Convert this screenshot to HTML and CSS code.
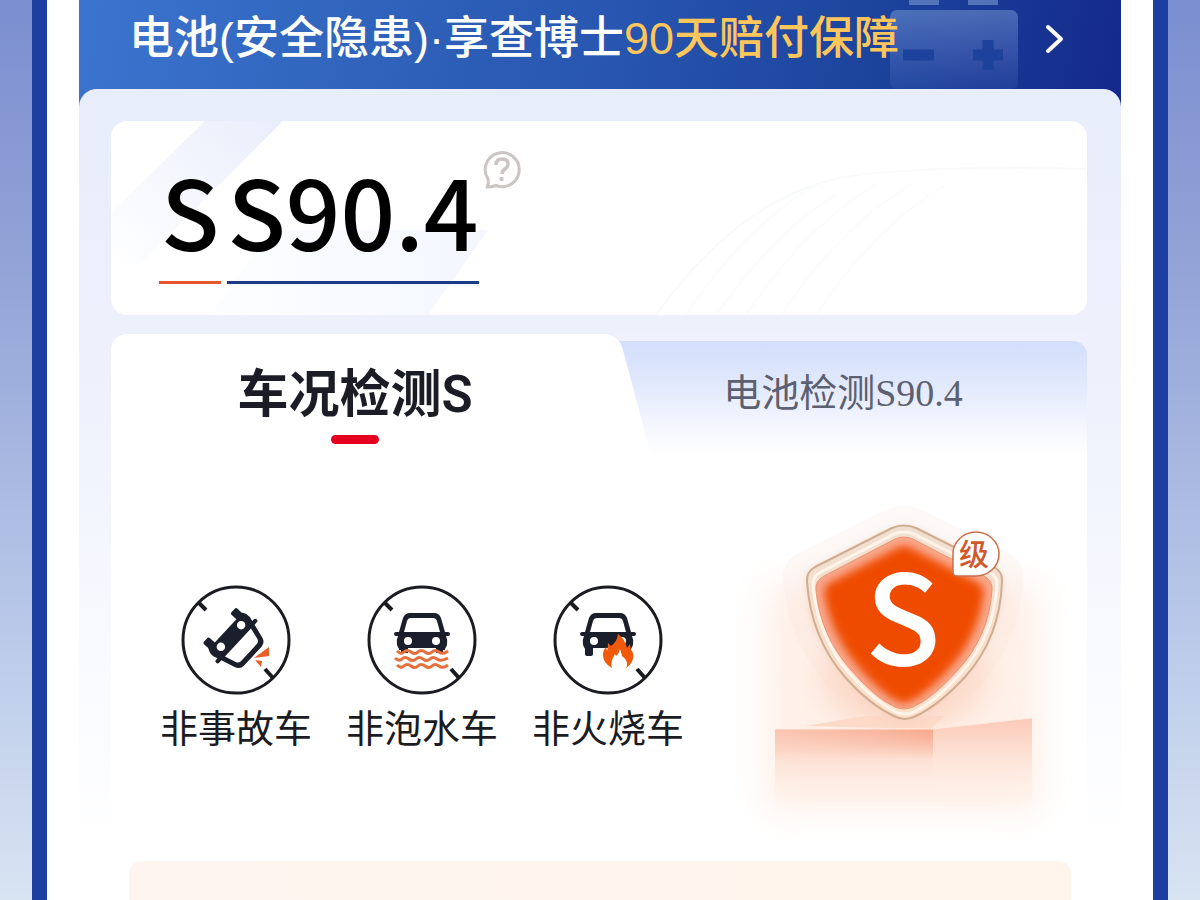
FILE: index.html
```html
<!DOCTYPE html>
<html lang="zh-CN">
<head>
    <meta charset="UTF-8">
    <meta name="viewport" content="width=device-width, initial-scale=1.0">
    <title>车况检测</title>
    <link rel="stylesheet" href="styles.css">
</head>
<body>
    <!-- Shared car drawing -->
    <svg class="defs" width="0" height="0" aria-hidden="true">
        <symbol id="car" viewBox="0 0 110 110">
            <path fill="#1b1e2b" fill-rule="evenodd" d="M43 28h24q5 0 7 5l4 14h3q2 0 2 2t-2 2h-2q2 4 1 9l-2 4v5q0 2-2 2h-4q-2 0-2-2v-6H40v6q0 2-2 2h-4q-2 0-2-2v-5l-2-4q-1-5 1-9h-2q-2 0-2-2t2-2h3l4-14q2-5 7-5zM44 33q-3 0-4 3l-3 11h36l-3-11q-1-3-4-3z"/>
            <circle cx="41" cy="56" r="4" fill="#fff"/>
            <circle cx="69" cy="56" r="4" fill="#fff"/>
        </symbol>
        <symbol id="ring" viewBox="0 0 110 110">
            <circle cx="55" cy="55" r="53" fill="none" stroke="#1b1c22" stroke-width="3"/>
            <path d="M17 17l8 8M84 84l8 9" stroke="#1b1c22" stroke-width="4"/>
        </symbol>
    </svg>

    <div class="frame">
        <div class="page">
            <a href="#" class="banner">
                <svg class="battery" width="132" height="89" viewBox="0 0 132 89" aria-hidden="true">
                    <defs>
                        <linearGradient id="bat" x1="0" y1="0" x2="0" y2="1">
                            <stop offset="0" stop-color="#8fb0e4" stop-opacity=".42"/>
                            <stop offset="1" stop-color="#8fa5e4" stop-opacity=".08"/>
                        </linearGradient>
                    </defs>
                    <path d="M20 0h30v5H20zM79 0h30v5H79z" fill="#7292cb" opacity=".65"/>
                    <rect x="1" y="10" width="128" height="79" rx="7" fill="url(#bat)"/>
                    <path d="M14 55h31M84 55h30M99 40v30" stroke="#1d429c" stroke-width="11"/>
                </svg>
                <span class="banner-text">电池(安全隐患)·享查博士<em>90天赔付保障</em></span>
                <svg class="arrow" width="20" height="32" viewBox="0 0 20 32" aria-hidden="true">
                    <path d="M3 4l13 12L3 28" fill="none" stroke="#fff" stroke-width="4" stroke-linecap="round" stroke-linejoin="round"/>
                </svg>
            </a>

            <main class="panel">
                <!-- Score -->
                <section class="score-card">
                    <svg class="score-bg" viewBox="0 0 976 194" preserveAspectRatio="none" aria-hidden="true">
                        <defs>
                            <linearGradient id="strip" x1="1" y1="0" x2="0" y2="1">
                                <stop offset="0" stop-color="#e9eefb"/>
                                <stop offset="1" stop-color="#fff"/>
                            </linearGradient>
                            <linearGradient id="strip2" x1="0" y1="0" x2="1" y2="0">
                                <stop offset="0" stop-color="#fbfdff"/>
                                <stop offset="1" stop-color="#eef3fd"/>
                            </linearGradient>
                        </defs>
                        <path d="M94 0h78L28 144H0V92z" fill="url(#strip)"/>
                        <path d="M160 109h217l-60 85H100z" fill="url(#strip2)" opacity=".7"/>
                        <path d="M545 194q90-125 200-140 100-10 230-6" fill="none" stroke="#f8fafb" stroke-width="2"/>
                        <path d="M575 194q60-90 130-130M605 194q60-85 120-120M635 194q60-90 130-130M670 194q60-90 130-130M705 194q60-90 130-130" fill="none" stroke="#fbfcfd" stroke-width="2"/>
                    </svg>
                    <div class="score">
                        <span class="score-part score-level">S</span>
                        <span class="score-part score-battery">S90.4</span>
                    </div>
                    <button class="help" type="button" aria-label="评分说明">
                        <svg width="38" height="38" viewBox="0 0 38 38">
                            <path d="M5 28A17 17 0 1 1 13 34.500Q9 36 4 36 6 33 5 28z" fill="none" stroke="#cbc6c3" stroke-width="3" stroke-linejoin="round"/>
                            <path d="M13 14q0-6 6-6t6 5q0 3-3 5t-3 5" fill="none" stroke="#cbc6c3" stroke-width="3.500"/>
                            <circle cx="18.500" cy="28" r="2.200" fill="#cbc6c3"/>
                        </svg>
                    </button>
                </section>

                <!-- Inspection -->
                <section class="check-card">
                    <div class="tabs" role="tablist">
                        <button class="tab active" type="button" role="tab" aria-selected="true">车况检测S</button>
                        <button class="tab" type="button" role="tab" aria-selected="false">电池检测S90.4</button>
                    </div>

                    <div class="check-body">
                        <ul class="features">
                            <li>
                                <svg viewBox="0 0 110 110" aria-hidden="true">
                                    <use href="#ring"/>
                                    <use href="#car" width="110" height="110" transform="translate(50 51) rotate(133) scale(1.060) translate(-55 -56)"/>
                                    <path d="M73 73l15-11v9zM74 75l7 1-1 6z" fill="#e9602a"/>
                                </svg>
                                <span>非事故车</span>
                            </li>
                            <li>
                                <svg viewBox="0 0 110 110" aria-hidden="true">
                                    <use href="#ring"/>
                                    <use href="#car" width="110" height="110"/>
                                    <path d="M28 65h55v18H28z" fill="#fff"/>
                                    <path d="M34 63h7v5h-7zM69 63h7v5h-7z" fill="#1b1e2b"/>
                                    <path d="M30 66q4 4 7 1t7 0 7 0 7 0 7 0 7 0 9-1M28 73q4 4 7 1t7 0 7 0 7 0 7 0 7 0 11-1M30 80q4 4 7 1t7 0 7 0 7 0 7 0 7 0 9-1" fill="none" stroke="#e5703c" stroke-width="3"/>
                                </svg>
                                <span>非泡水车</span>
                            </li>
                            <li>
                                <svg viewBox="0 0 110 110" aria-hidden="true">
                                    <use href="#ring"/>
                                    <use href="#car" width="110" height="110"/>
                                    <path d="M59 83q-9-5-9-13 0-5 3-8l1 4q1-4 1-8l3 3q6-4 7-12 7 5 9 14l3-4q0 5 3 9 2 9-7 15 3-7-4-12l-2-7q-1 5-4 7l-1-2q-4 7-3 14z" fill="#f05a0a"/>
                                    <path d="M59 83q-2-7 3-13l1 2q3-3 4-7l2 7q7 6 4 11z" fill="#fff"/>
                                </svg>
                                <span>非火烧车</span>
                            </li>
                        </ul>

                        <svg class="shield" width="367" height="370" viewBox="0 0 367 370" role="img" aria-label="S级">
                            <defs>
                                <radialGradient id="glow">
                                    <stop offset="0" stop-color="#fbc3aa" stop-opacity=".85"/>
                                    <stop offset=".6" stop-color="#fddccb" stop-opacity=".6"/>
                                    <stop offset="1" stop-color="#fff" stop-opacity="0"/>
                                </radialGradient>
                                <linearGradient id="boxFront" x1="0" y1="0" x2="0" y2="1">
                                    <stop offset="0" stop-color="#fbc9b7"/>
                                    <stop offset=".35" stop-color="#fde0d3"/>
                                    <stop offset="1" stop-color="#fff4ec" stop-opacity="0"/>
                                </linearGradient>
                                <linearGradient id="boxShade" x1="0" y1="0" x2="1" y2="0">
                                    <stop offset="0" stop-color="#f9b8a2" stop-opacity=".3"/>
                                    <stop offset="1" stop-color="#f7a78b"/>
                                </linearGradient>
                                <linearGradient id="fade" x1="0" y1="0" x2="0" y2="1">
                                    <stop offset="0" stop-color="#fff"/>
                                    <stop offset="1" stop-color="#000"/>
                                </linearGradient>
                                <linearGradient id="outer" x1="0" y1="0" x2="0" y2="1">
                                    <stop offset="0" stop-color="#f6ece8" stop-opacity=".3"/>
                                    <stop offset="1" stop-color="#f8cdb9" stop-opacity=".1"/>
                                </linearGradient>
                                <linearGradient id="rim" x1="0" y1="0" x2="0" y2="1">
                                    <stop offset="0" stop-color="#f0dfd0"/>
                                    <stop offset="1" stop-color="#fde0cb"/>
                                </linearGradient>
                                <mask id="boxMask"><rect x="55" y="239" width="158" height="30" fill="url(#fade)"/></mask>
                                <clipPath id="inner">
                                    <path d="M175 49q9-4 18 0l71 37q9 5 8 14-3 46-34 80-25 28-45 37-9 4-18 0-20-9-44-37-31-35-35-80-1-9 8-14z"/>
                                </clipPath>
                                <filter id="soft" x="-20%" y="-20%" width="140%" height="140%"><feGaussianBlur stdDeviation="4"/></filter>
                                <filter id="halo" x="-20%" y="-20%" width="140%" height="140%"><feGaussianBlur stdDeviation="18"/></filter>
                            </defs>

                            <!-- Glow and plinth -->
                            <rect x="45" y="95" width="275" height="225" fill="#fee9de" opacity=".7" filter="url(#halo)"/>
                            <ellipse cx="184" cy="190" rx="125" ry="80" fill="url(#glow)"/>
                            <path d="M85 236l60-10h80l-15 13z" fill="#fdd9c8"/>
                            <path d="M55 239h158v84H55z" fill="url(#boxFront)"/>
                            <path d="M55 239h158v30H55z" fill="url(#boxShade)" mask="url(#boxMask)"/>
                            <path d="M213 239l99-11v98h-99z" fill="url(#boxFront)"/>
                            <path d="M55 239h158l99-11" fill="none" stroke="#feeadf" stroke-width="1"/>

                            <!-- Shield -->
                            <path d="M165 20q18-8 37 0l88 44q15 8 13 26-4 68-48 111-32 31-71 37-39-6-71-37-44-43-50-111-1-18 14-26z" fill="url(#outer)"/>
                            <path d="M172 39q12-5 24 0l77 38q9 5 9 15-2 52-37 92-26 30-49 42-12 5-24 0-24-12-49-42-34-40-37-92 0-10 9-15z" fill="#eec0a4" opacity=".5" filter="url(#soft)"/>
                            <path d="M172 38q12-5 24 0l78 39q9 5 8 15-2 56-37 95-26 28-49 39-11 6-22 0-24-11-49-39-34-39-38-95-1-10 8-15z" fill="url(#rim)" stroke="#d0ad91" stroke-width="2"/>
                            <path d="M174 44q10-4 20 0l75 38q9 5 8 13-3 51-36 88-25 28-47 39-9 4-18 0-22-11-47-39-31-36-36-88-1-8 8-13z" fill="none" stroke="#fff4e9" stroke-width="3"/>
                            <g clip-path="url(#inner)">
                                <rect x="85" y="35" width="200" height="200" fill="#f9a88d"/>
                                <path d="M179 59q5-2 10 0l69 36q4 3 4 7-5 42-33 74-22 25-40 34-5 2-10 0-18-9-39-34-28-33-34-74 0-4 4-7z" fill="#ef4b00" stroke="#ef4b00" stroke-width="4" filter="url(#soft)"/>
                                <path d="M184 66l70 38q-6 36-33 67-20 24-37 32-17-8-36-32-27-31-33-67z" fill="#ef4b00"/>
                            </g>
                            <path d="M175 49q9-4 18 0l71 37q9 5 8 14-3 46-34 80-25 28-45 37-9 4-18 0-20-9-44-37-31-35-35-80-1-9 8-14z" fill="none" stroke="#eb9472" stroke-width="1"/>
                            <text class="shield-letter" x="183" y="175" text-anchor="middle">S</text>

                            <!-- Level bubble -->
                            <path d="M237 86q-4 0-4-4V64a23 22 0 0 1 46 0 23 22 0 0 1-23 22z" fill="#fff" stroke="#c96f49" stroke-width="1.500"/>
                            <text class="shield-level" x="254" y="75" text-anchor="middle">级</text>
                        </svg>
                    </div>

                    <div class="note"></div>
                </section>
            </main>
        </div>
    </div>
</body>
</html>
```
FILE: styles.css
```css
* {
    box-sizing: border-box;
}

body {
    margin: 0;
    min-height: 100vh;
    display: flex;
    padding: 0 32px;
    font-family: "Noto Sans CJK SC", sans-serif;
    color: #1b1c22;
    background: linear-gradient(#7b8ed0, #96a6d8 33%, #b6c6e8 67%, #d8e4f2);
}

button {
    border: 0;
    padding: 0;
    background: none;
    font: inherit;
    color: inherit;
}

.defs {
    position: absolute;
}

.frame {
    flex: 1;
    display: flex;
    min-width: 0;
    padding: 0 32px;
    border: solid #1e3fa2;
    border-width: 0 15px;
    background: #fff;
}

.page {
    flex: 1;
    display: flex;
    flex-direction: column;
    min-width: 0;
    background: linear-gradient(100deg, #3b74cf, #2f62ba 30%, #2856b0 50%, #1c449d 75%, #14298b) top / 100% 120px no-repeat;
}

/* Banner */
.banner {
    position: relative;
    display: flex;
    justify-content: space-between;
    align-items: center;
    height: 89px;
    padding: 0 56px 12px 50px;
    color: #fff;
    text-decoration: none;
}

.battery {
    position: absolute;
    top: 0;
    right: 100px;
}

.banner-text {
    position: relative;
    font-family: "Liberation Sans", "Noto Sans CJK SC", sans-serif;
    font-size: 45px;
    font-weight: 500;
    line-height: 64px;
    white-space: nowrap;
}

.banner-text em {
    font-style: normal;
    color: #fdc65b;
}

/* Panel */
.panel {
    flex: 1;
    display: flex;
    flex-direction: column;
    gap: 19px;
    padding: 32px 34px 0 32px;
    border-radius: 18px 18px 0 0;
    background: linear-gradient(#e8edfb, #eff2fc 40%, #f9faff 70%, #fff 94%);
}

.score-card {
    position: relative;
    display: flex;
    align-items: flex-start;
    gap: 4px;
    height: 194px;
    padding: 30px 48px 0;
    border-radius: 16px;
    background: #fff;
    overflow: hidden;
}

.score-bg {
    position: absolute;
    inset: 0;
    width: 100%;
    height: 100%;
}

.score {
    position: relative;
    display: flex;
    gap: 6px;
    font-size: 96px;
    font-weight: 500;
    line-height: 118px;
    color: #000;
}

.score-part {
    height: 133px;
    border-bottom: 3px solid #1d3a86;
    white-space: nowrap;
}

.score-level {
    padding: 0 2px;
    border-color: #e4572e;
}

.help {
    position: relative;
    height: 38px;
}

/* Inspection card */
.check-card {
    flex: 1;
    display: flex;
    flex-direction: column;
    border-radius: 16px 16px 0 0;
    background: #fff;
}

.tabs {
    display: grid;
    grid-template-columns: 1fr 1fr;
    height: 122px;
    border-radius: 16px 0 0 0;
    background: linear-gradient(#eff2fc 24px, transparent 24px);
}

.tab {
    position: relative;
    height: 115px;
    padding-bottom: 18px;
    margin-top: 7px;
    border-radius: 0 14px 0 0;
    font-family: "Liberation Serif", "Noto Sans CJK SC", serif;
    font-size: 38px;
    color: #5c6070;
    background: linear-gradient(#d2defb, #e0e8fc 35%, #f5f7ff 75%, #fff);
}

.tab.active {
    z-index: 1;
    height: 122px;
    margin-top: 0;
    padding-bottom: 10px;
    border-radius: 16px 0 0 0;
    font-family: Roboto, "Noto Sans CJK SC", sans-serif;
    font-size: 51px;
    font-weight: 600;
    color: #1b1c26;
    background: #fff;
}

/* Slanted edge of the active tab */
.tab.active::after {
    content: "";
    position: absolute;
    z-index: -1;
    top: 0;
    right: -36px;
    width: 80px;
    height: 122px;
    border-radius: 0 14px 0 0;
    background: #fff;
    transform: skewX(15deg);
}

.tab.active::before {
    content: "";
    position: absolute;
    left: calc(50% - 24px);
    bottom: 12px;
    width: 48px;
    height: 9px;
    border-radius: 5px;
    background: #e60020;
}

.check-body {
    display: flex;
    justify-content: space-between;
    padding: 34px 0 0 49px;
}

.features {
    display: flex;
    gap: 34px;
    margin: 0;
    padding: 95px 0 0;
    list-style: none;
    font-size: 38px;
    line-height: 50px;
    white-space: nowrap;
}

.features li {
    display: flex;
    flex-direction: column;
    align-items: center;
    gap: 6px;
}

.features svg {
    width: 110px;
    height: 110px;
}

.shield {
    flex: none;
}

.shield-letter {
    font-size: 124px;
    font-weight: 500;
    fill: #fff;
}

.shield-level {
    font-size: 30px;
    font-weight: 500;
    fill: #d0592b;
}

.note {
    flex: 1;
    min-height: 38px;
    margin: 1px 16px 0 18px;
    border-radius: 12px 12px 0 0;
    background: linear-gradient(90deg, #fff5f0, #fff5ec);
}
```
